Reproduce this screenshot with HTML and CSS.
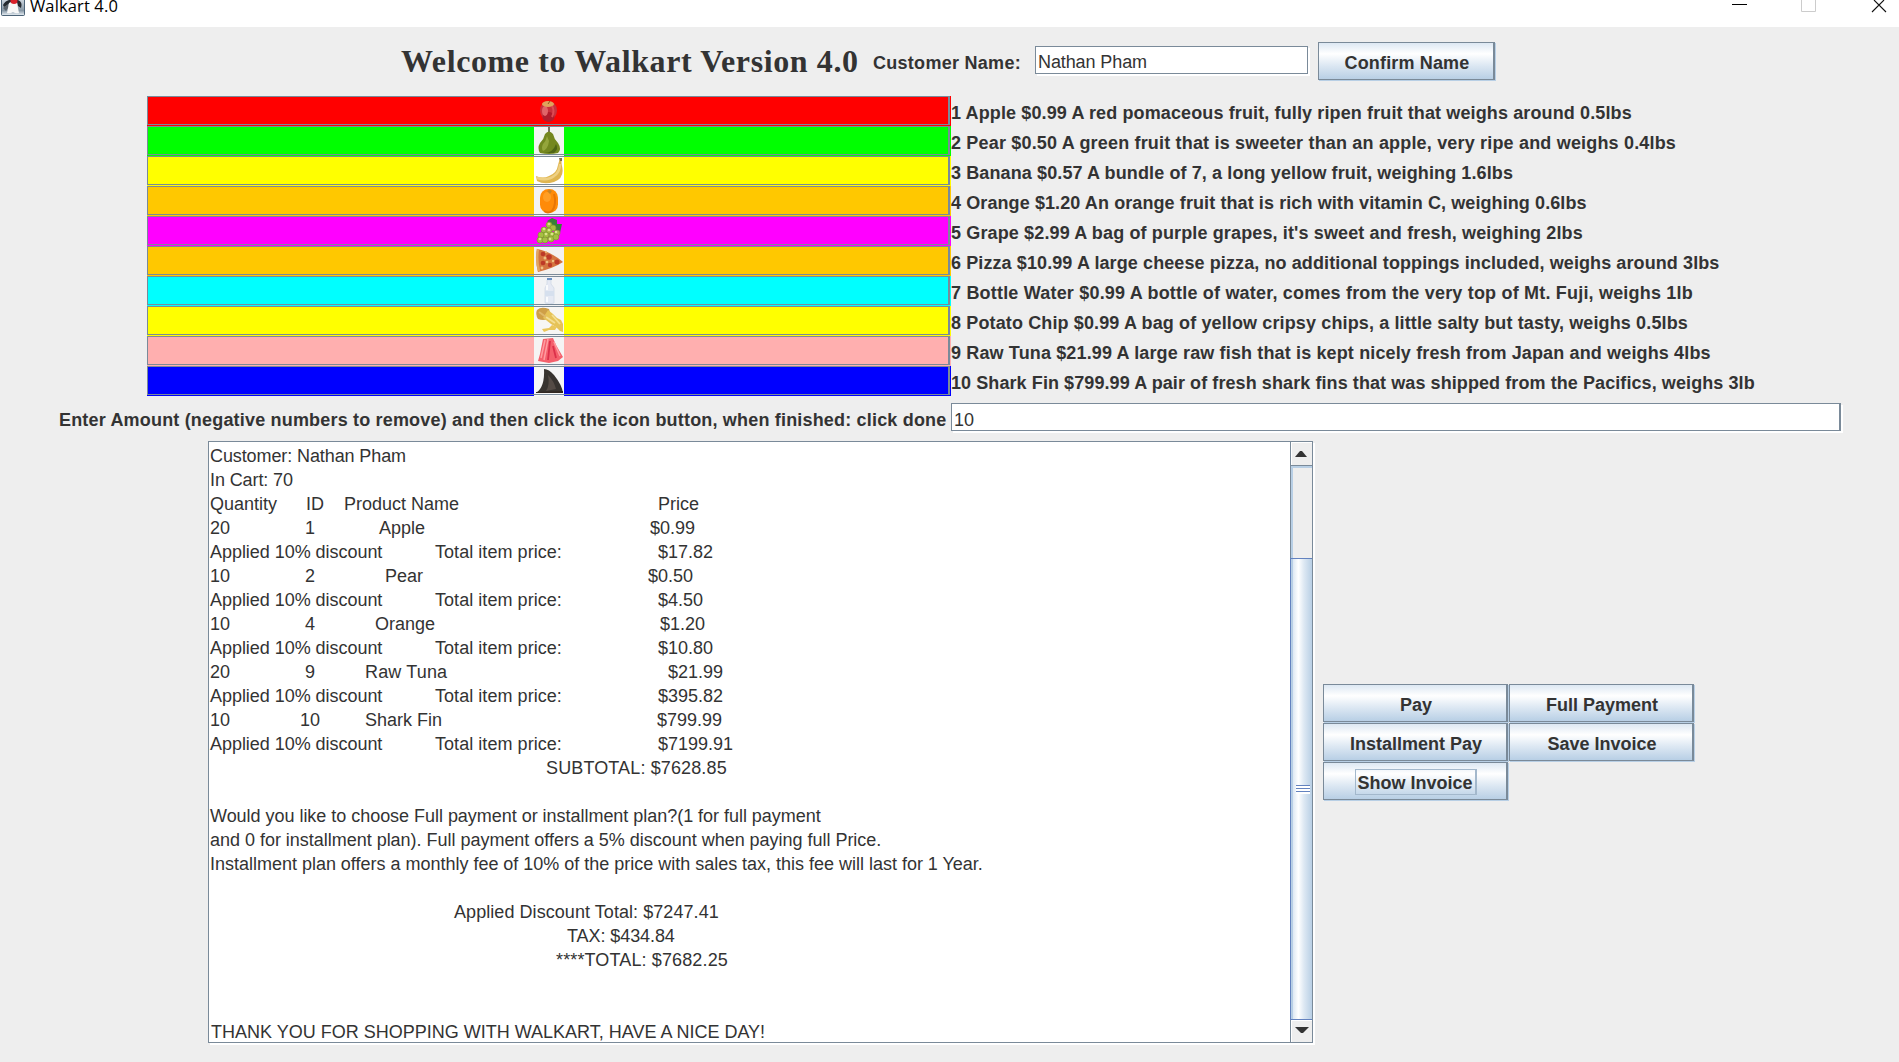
FILE: index.html
```html
<!DOCTYPE html>
<html lang="en">
<head>
<meta charset="utf-8">
<title>Walkart 4.0</title>
<link rel="stylesheet" href="styles.css">
</head>
<body>
<header class="titlebar">
  <svg class="app-icon" width="24" height="16" viewBox="0 0 24 16"><defs><linearGradient id="duke" x1="0" y1="0" x2="0" y2="1"><stop offset="0" stop-color="#c9d3dc"/><stop offset=".7" stop-color="#8797a5"/><stop offset="1" stop-color="#e2eaf0"/></linearGradient></defs><path d="M0 0H24V14Q24 16 22 16H2Q0 16 0 14Z" fill="#4d6478"/><path d="M1 0H23V15H1Z" fill="url(#duke)"/><path d="M2 5Q4 1 8 0H17Q22 2 20 8L17 6 16 2H9L7 5 3 7Z" fill="#252a30"/><path d="M2 8L7 4 8 7 5 11Z" fill="#5b646c"/><path d="M8 3H16L17 8 18 13Q15 14 12 12 9 14 6 13Z" fill="#f7f7f7"/><ellipse cx="13" cy="1" rx="3.5" ry="3" fill="#d8202a"/></svg>
  <span class="app-title">Walkart 4.0</span>
  <svg class="controls" width="160" height="14" viewBox="0 0 160 14"><path d="M2 4.500H17" stroke="#000"/><path d="M71.500 0V11.500H85.500V0" fill="none" stroke="#ccc"/><path d="M142 12L154 0M144 0L156 12" stroke="#111" stroke-width="1.100"/></svg>
</header>

<section class="welcome">
  <h1>Welcome to Walkart Version 4.0</h1>
  <label class="name-label">Customer Name:</label>
  <div class="field name-field">Nathan Pham</div>
  <button class="btn confirm"><span>Confirm Name</span></button>
</section>

<main class="products">
  <div class="product"><div class="bar red"><svg viewBox="0 0 30 30"><ellipse cx="14.500" cy="14.500" rx="8.500" ry="9.500" fill="#c8303c"/><ellipse cx="14.500" cy="21" rx="6" ry="5" fill="#b01c2c"/><ellipse cx="11" cy="15" rx="3" ry="5" fill="#e06468"/><path d="M18 10Q21 15 18 21" stroke="#dc4b54" stroke-width="2" fill="none"/><ellipse cx="14" cy="8" rx="6" ry="3" fill="#e0a25c"/><path d="M14 8L16 5" stroke="#8c5a20"/></svg></div><span class="desc d1">1 Apple $0.99 A red pomaceous fruit, fully ripen fruit that weighs around 0.5lbs</span></div>
  <div class="product"><div class="bar green"><svg viewBox="0 0 30 30"><path d="M0 0H30V30H0Z" fill="#f2f4f1"/><path d="M15 6V0" stroke="#4f4630" stroke-width="1.500"/><path d="M11 8Q15 3 19 8 20 13 24 17 28 23 24 27 15 29 6 27 3 22 6 17 10 13 11 8Z" fill="#74871f"/><path d="M13 10Q12 15 9 18 7 22 9 25 14 23 15 15Z" fill="#94a53b"/><path d="M22 18Q25 23 20 27H10Q19 27 22 18Z" fill="#4e6415"/></svg></div><span class="desc d2">2 Pear $0.50 A green fruit that is sweeter than an apple, very ripe and weighs 0.4lbs</span></div>
  <div class="product"><div class="bar yellow"><svg viewBox="0 0 30 30"><path d="M0 0H30V30H0Z" fill="#fff"/><path d="M26 2L28 3Q27 6 28 10 31 22 20 26 10 29 3 25L2 20Q9 23 15 20 23 17 24 9Z" fill="#dfb550"/><path d="M3 22Q14 25 20 20 26 16 26 8" stroke="#eed083" stroke-width="2.500" fill="none"/><path d="M25 2H28V5H26Z" fill="#806e49"/></svg></div><span class="desc d3">3 Banana $0.57 A bundle of 7, a long yellow fruit, weighing 1.6lbs</span></div>
  <div class="product"><div class="bar amber"><svg viewBox="0 0 30 30"><path d="M0 0H30V30H0Z" fill="#f3f3f3"/><rect x="6" y="3" width="18" height="24" rx="8.500" fill="#ff8b08"/><path d="M20 8Q23 18 18 25 14 28 10 25" stroke="#e87505" stroke-width="2" fill="none"/><ellipse cx="13" cy="11" rx="4" ry="5" fill="#ff9e24"/><path d="M13 5Q16 3 18 5L16 8Z" fill="#c88424"/></svg></div><span class="desc d4">4 Orange $1.20 An orange fruit that is rich with vitamin C, weighing 0.6lbs</span></div>
  <div class="product"><div class="bar magenta"><svg viewBox="0 0 30 30"><path d="M13 5L18 2 23 4 23 8 28 8 26 17 22 15 17 9Z" fill="#397f3a"/><g fill="#a6bf42" stroke="#7f9b2e" stroke-width=".7"><circle cx="15" cy="9" r="3"/><circle cx="19" cy="12" r="3"/><circle cx="10" cy="14" r="3"/><circle cx="15" cy="15" r="3"/><circle cx="23" cy="17" r="3"/><circle cx="18" cy="19" r="3"/><circle cx="12" cy="19" r="3"/><circle cx="7" cy="19" r="3"/><circle cx="6" cy="24" r="3"/><circle cx="11" cy="24" r="3"/><circle cx="17" cy="23" r="3"/><circle cx="22" cy="21" r="3"/></g><g fill="#dbe48c"><circle cx="15" cy="8" r="1.300"/><circle cx="10" cy="13" r="1.300"/><circle cx="15" cy="14" r="1.300"/><circle cx="12" cy="18" r="1.300"/><circle cx="18" cy="18" r="1.300"/><circle cx="6" cy="23" r="1.300"/><circle cx="22" cy="16" r="1.300"/><circle cx="16" cy="23" r="1.300"/></g></svg></div><span class="desc d5">5 Grape $2.99 A bag of purple grapes, it's sweet and fresh, weighing 2lbs</span></div>
  <div class="product"><div class="bar amber"><svg viewBox="0 0 30 30"><path d="M0 0H30V30H0Z" fill="#f3f1ef"/><path d="M3 3Q16 5 29 16Q20 22 4 26Q1 15 3 3Z" fill="#d47440"/><path d="M4 3Q2 14 5 25" stroke="#e3a55f" stroke-width="2.500" fill="none"/><g fill="#bd3a28"><circle cx="9" cy="8" r="2.300"/><circle cx="15" cy="11" r="2.800"/><circle cx="9" cy="17" r="2.300"/><circle cx="16" cy="19" r="2.200"/><circle cx="23" cy="16" r="2.500"/></g><g fill="#efc182"><circle cx="11" cy="12" r="1.500"/><circle cx="13" cy="16" r="1.300"/><circle cx="19" cy="15" r="1.200"/><circle cx="8" cy="22" r="1.400"/><circle cx="12" cy="6" r="1"/></g></svg></div><span class="desc d6">6 Pizza $10.99 A large cheese pizza, no additional toppings included, weighs around 3lbs</span></div>
  <div class="product"><div class="bar cyan"><svg viewBox="0 0 30 30"><path d="M0 0H30V30H0Z" fill="#f2f3f5"/><path d="M13 4H17V8L20 12V27Q15 29 11 27V12L13 8Z" fill="#e5e9f3" stroke="#d0d9e6" stroke-width=".8"/><path d="M11 15H20V20H11Z" fill="#d6e0ee"/><path d="M13 9V14M13 21V26" stroke="#fff" stroke-width="1.500"/><path d="M13 2H18V4H13Z" fill="#6890c4"/></svg></div><span class="desc d7">7 Bottle Water $0.99 A bottle of water, comes from the very top of Mt. Fuji, weighs 1lb</span></div>
  <div class="product"><div class="bar yellow"><svg viewBox="0 0 30 30"><path d="M0 0H30V30H0Z" fill="#f7f6f4"/><path d="M3 4Q7 0 15 3L17 10Q12 16 4 13 1 8 3 4Z" fill="#cf9f47"/><path d="M14 4L19 8 23 12 27 14 29 18 29 26 26 25 22 21 17 18 12 14 9 12Z" fill="#e6c358"/><path d="M8 23L15 22 18 19 23 21 21 24 15 24 10 26Z" fill="#eac65b"/><path d="M12 11L21 17M18 9L26 18" stroke="#f4df93" stroke-width="1.800"/><path d="M5 6L12 11" stroke="#dfb96c" stroke-width="2"/></svg></div><span class="desc d8">8 Potato Chip $0.99 A bag of yellow cripsy chips, a little salty but tasty, weighs 0.5lbs</span></div>
  <div class="product"><div class="bar pink"><svg viewBox="0 0 30 30"><path d="M0 0H30V30H0Z" fill="#f5f4f4"/><path d="M9 3L19 2 22 9 29 21 24 25 15 27 4 25 6 18Z" fill="#f4606c"/><path d="M11 4L7 22M14 3L10 24M20 6L26 20" stroke="#ff9ca0" stroke-width="1.500"/><path d="M16 5L14 24M19 10L22 22" stroke="#dc304a" stroke-width="1.800"/></svg></div><span class="desc d9">9 Raw Tuna $21.99 A large raw fish that is kept nicely fresh from Japan and weighs 4lbs</span></div>
  <div class="product"><div class="bar blue"><svg viewBox="0 0 30 30"><path d="M0 0H30V30H0Z" fill="#f5f5f5"/><path d="M10 3Q15 3 20 9 28 19 29 27L2 27Q11 21 10 3Z" fill="#37332f"/><path d="M14 9Q20 15 22 23L12 25Q16 19 14 9Z" fill="#544b45"/><path d="M2 26L29 25V27H2Z" fill="#302621"/></svg></div><span class="desc d10">10 Shark Fin $799.99 A pair of fresh shark fins that was shipped from the Pacifics, weighs 3lb</span></div>
</main>

<section class="amount">
  <label class="amount-label">Enter Amount (negative numbers to remove) and then click the icon button, when finished: click done</label>
  <div class="field amount-field">10</div>
</section>

<section class="checkout">
  <div class="pane">
    <div class="receipt">
      <p class="customer">Customer: Nathan Pham</p>
      <p class="customer">In Cart: 70</p>
      <p class="head"><span>Quantity</span><span>ID</span><span>Product Name</span><span>Price</span></p>
      <p class="item apple"><span>20</span><span>1</span><span>Apple</span><span>$0.99</span></p>
      <p class="discount"><span>Applied 10% discount</span><span>Total item price:</span><span>$17.82</span></p>
      <p class="item pear"><span>10</span><span>2</span><span>Pear</span><span>$0.50</span></p>
      <p class="discount"><span>Applied 10% discount</span><span>Total item price:</span><span>$4.50</span></p>
      <p class="item orange"><span>10</span><span>4</span><span>Orange</span><span>$1.20</span></p>
      <p class="discount"><span>Applied 10% discount</span><span>Total item price:</span><span>$10.80</span></p>
      <p class="item tuna"><span>20</span><span>9</span><span>Raw Tuna</span><span>$21.99</span></p>
      <p class="discount"><span>Applied 10% discount</span><span>Total item price:</span><span>$395.82</span></p>
      <p class="item fin"><span>10</span><span>10</span><span>Shark Fin</span><span>$799.99</span></p>
      <p class="discount"><span>Applied 10% discount</span><span>Total item price:</span><span>$7199.91</span></p>
      <p class="subtotal">SUBTOTAL: $7628.85</p>
      <p></p>
      <p class="offer1">Would you like to choose Full payment or installment plan?(1 for full payment</p>
      <p class="offer2">and 0 for installment plan). Full payment offers a 5% discount when paying full Price.</p>
      <p class="offer3">Installment plan offers a monthly fee of 10% of the price with sales tax, this fee will last for 1 Year.</p>
      <p></p>
      <p class="applied">Applied Discount Total: $7247.41</p>
      <p class="tax">TAX: $434.84</p>
      <p class="total">****TOTAL: $7682.25</p>
      <p></p>
      <p></p>
      <p class="thanks">THANK YOU FOR SHOPPING WITH WALKART, HAVE A NICE DAY!</p>
    </div>
    <div class="scrollbar">
      <div class="arrow up"><svg width="12" height="6" viewBox="0 0 12 6"><path d="M0 6L5 0H7L12 6Z" fill="#333"/></svg></div>
      <div class="track"></div>
      <div class="thumb"><div class="grip"></div></div>
      <div class="arrow down"><svg width="14" height="6" viewBox="0 0 14 6"><path d="M0 0H14L8 6H6Z" fill="#333"/></svg></div>
    </div>
  </div>
  <div class="actions">
    <button class="btn"><span>Pay</span></button>
    <button class="btn"><span>Full Payment</span></button>
    <button class="btn"><span>Installment Pay</span></button>
    <button class="btn"><span>Save Invoice</span></button>
    <button class="btn focused"><span>Show Invoice</span></button>
  </div>
</section>
</body>
</html>
```
FILE: styles.css
```css
* { box-sizing: border-box; }
body {
  margin: 0;
  width: 1899px;
  height: 1062px;
  overflow: hidden;
  background: #eee;
  color: #333;
  font: 18px/24px "Liberation Sans", Arial, sans-serif;
}
h1, p { margin: 0; }

.titlebar {
  display: flex;
  align-items: flex-start;
  height: 27px;
  padding-left: 1px;
  background: #fff;
  color: #000;
}
.app-icon { flex: none; }
.app-title {
  margin: -6px 0 0 5px;
  font: 16.500px/24px "Open Sans", sans-serif;
  letter-spacing: 0.13px;
  white-space: nowrap;
}
.controls { margin-left: auto; margin-right: 9px; }

.welcome {
  display: flex;
  align-items: flex-start;
  height: 69px;
  padding-left: 401px;
}
h1 {
  width: 472px;
  padding-top: 16px;
  font: bold 32px/36px "Liberation Serif", "Times New Roman", serif;
  letter-spacing: 0.61px;
  white-space: nowrap;
}
.name-label {
  width: 162px;
  padding-top: 24px;
  font-weight: bold;
  letter-spacing: 0.28px;
  white-space: nowrap;
}
.field {
  border: 1px solid #7a8a99;
  background: #fff;
  box-shadow: 2px 2px 0 #fff;
  padding-left: 2px;
}
.name-field {
  width: 273px;
  height: 28px;
  margin-top: 19px;
  line-height: 31px;
  letter-spacing: -0.1px;
}
.btn {
  position: relative;
  width: 185px;
  height: 38px;
  padding: 0;
  border: solid #7a8a99;
  border-width: 1px 2px 1px 1px;
  border-radius: 0;
  background: linear-gradient(#dde8f3, #fff 30%, #dde8f3 62%, #b8cfe5);
  box-shadow: 1px 1px 0 #b8cfe5;
  color: #333;
  font: bold 18px/24px "Liberation Sans", Arial, sans-serif;
  text-align: center;
}
.confirm {
  width: 177px;
  margin: 15px 0 0 10px;
  letter-spacing: 0.15px;
}
.btn span {
  display: inline-block;
  padding: 4px 0 0 2px;
}
.btn.focused span {
  height: 26px;
  width: 122px;
  margin: 1px 0 0 1px;
  padding: 1px 0 0;
  border: 1px solid #a3b8cc;
  border-right-width: 2px;
}

.products { padding-left: 147px; }
.product {
  display: flex;
  height: 30px;
}
.bar {
  position: relative;
  width: 804px;
  height: 30px;
  display: flex;
  justify-content: center;
}
.bar::after {
  content: "";
  position: absolute;
  inset: 0 1px 1px 0;
  border: 1px solid #7a8a99;
  border-right-width: 2px;
}
.bar svg { width: 30px; height: 30px; }
.red { background: #f00; }
.green { background: #0f0; }
.yellow { background: #ff0; }
.amber { background: #ffc800; }
.magenta { background: #f0f; }
.cyan { background: #0ff; }
.pink { background: #ffafaf; }
.blue { background: #00f; }
.desc {
  padding-top: 5px;
  font-weight: bold;
  white-space: nowrap;
}
.d1 { letter-spacing: 0.121px; }
.d2 { letter-spacing: 0.178px; }
.d3 { letter-spacing: 0.11px; }
.d4 { letter-spacing: 0.096px; }
.d5 { letter-spacing: 0.133px; }
.d6 { letter-spacing: 0.098px; }
.d7 { letter-spacing: 0.193px; }
.d8 { letter-spacing: 0.128px; }
.d9 { letter-spacing: 0.139px; }
.d10 { letter-spacing: 0.083px; }

.amount {
  display: flex;
  height: 45px;
  padding: 7px 0 0 59px;
}
.amount-label {
  width: 892px;
  padding-top: 5px;
  font-weight: bold;
  letter-spacing: 0.182px;
  white-space: nowrap;
}
.amount-field {
  width: 890px;
  height: 28px;
  border-right-width: 2px;
  line-height: 32px;
}

.checkout {
  display: flex;
  padding-left: 208px;
}
.pane {
  display: flex;
  width: 1105px;
  height: 602px;
  border: 1px solid #7a8a99;
  background: #fff;
  box-shadow: 2px 2px 0 #fff;
}
.receipt {
  width: 1081px;
  height: 600px;
  padding: 2px 0 0 1px;
}
.receipt p {
  height: 24px;
  white-space: nowrap;
}
.customer { letter-spacing: -0.1px; }
.head, .item, .discount { display: grid; }
.head { grid-template-columns: 96px 38px 314px 1fr; }
.discount { grid-template-columns: 225px 223px 1fr; }
.discount span:first-child { letter-spacing: -0.04px; }
.discount span:nth-child(2) { letter-spacing: 0.05px; }
.apple { grid-template-columns: 95px 74px 271px 1fr; }
.pear { grid-template-columns: 95px 80px 263px 1fr; }
.orange { grid-template-columns: 95px 70px 285px 1fr; }
.tuna { grid-template-columns: 95px 60px 303px 1fr; }
.tuna span:nth-child(3) { letter-spacing: 0.15px; }
.fin { grid-template-columns: 90px 65px 292px 1fr; }
.receipt .subtotal { padding-left: 336px; letter-spacing: 0.13px; }
.offer1 { letter-spacing: -0.03px; }
.offer2 { letter-spacing: -0.02px; }
.offer3 { letter-spacing: -0.012px; }
.receipt .applied { padding-left: 244px; letter-spacing: 0.06px; }
.receipt .tax { padding-left: 357px; letter-spacing: -0.08px; }
.receipt .total { padding-left: 346px; letter-spacing: 0.13px; }
.receipt .thanks { padding-left: 1px; }

.scrollbar {
  display: flex;
  flex-direction: column;
  width: 22px;
  border-left: 1px solid #7a8a99;
  background: #eee;
}
.arrow {
  display: flex;
  justify-content: center;
  border: solid #fff;
  border-width: 1px 0 0 1px;
}
.up {
  height: 24px;
  padding: 8px 2px 0 0;
}
.track {
  height: 92px;
  border: solid #b8cfe5;
  border-width: 2px 0 0 2px;
  box-shadow: 0 -1px 0 #7a8a99;
}
.thumb {
  display: flex;
  align-items: center;
  justify-content: center;
  height: 462px;
  margin-left: -1px;
  padding: 1px 0 0 2px;
  border: solid #6382bf;
  border-width: 1px 0 1px 1px;
  background: linear-gradient(90deg, #b8cfe5 2px, #dde8f3 2px, #fff 35%, #dde8f3 62%, #b8cfe5);
}
.grip {
  width: 14px;
  height: 9px;
  background: repeating-linear-gradient(#6382bf 0 1px, #fff 1px 3px);
}
.down {
  height: 22px;
  padding: 6px 1px 0 0;
}

.actions {
  display: grid;
  grid-template-columns: 185px 185px;
  grid-auto-rows: 38px;
  gap: 1px;
  align-content: start;
  margin: 243px 0 0 10px;
}
```
